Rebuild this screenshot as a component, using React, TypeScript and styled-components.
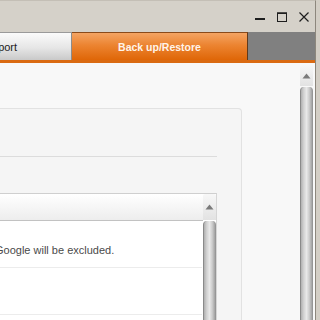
import styled, { createGlobalStyle } from 'styled-components';

const GlobalStyle = createGlobalStyle`
  html, body {
    margin: 0;
    padding: 0;
    overflow: hidden;
  }
  body {
    font-family: "Liberation Sans", Arial, sans-serif;
  }
`;

const Frame = styled.div`
  display: flex;
  width: 320px;
  height: 320px;
  overflow: hidden;
  background: #d3cec5;
  padding-right: 4px;
  box-sizing: border-box;
`;

const Window = styled.div`
  flex: 1;
  display: flex;
  flex-direction: column;
  min-width: 0;
  border-right: 1px solid #8d877d;
  border-top: 1px solid #c4bfb6;
`;

const TitleBar = styled.div`
  height: 31px;
  flex-shrink: 0;
  display: flex;
  align-items: center;
  justify-content: flex-end;
  gap: 12px;
  padding-right: 6px;
  background: #d5d1c9;
`;

const WinButton = styled.button`
  width: 10px;
  height: 10px;
  padding: 0;
  border: none;
  background: transparent;
  display: flex;
  align-items: center;
  justify-content: center;
  svg {
    display: block;
  }
`;

const TabStrip = styled.div`
  height: 28px;
  flex-shrink: 0;
  display: flex;
  align-items: flex-end;
  background: #808080;
`;

const Tab = styled.div<{ $active?: boolean; $width: number; $offset?: number }>`
  width: ${({ $width }) => $width}px;
  margin-left: ${({ $offset }) => $offset ?? 0}px;
  height: 28px;
  box-sizing: border-box;
  display: flex;
  align-items: center;
  justify-content: center;
  font-size: ${({ $active }) => ($active ? '10.5px' : '11px')};
  font-weight: ${({ $active }) => ($active ? 700 : 400)};
  color: ${({ $active }) => ($active ? '#fff4ea' : '#222')};
  border-top: 1px solid ${({ $active }) => ($active ? '#8a4a1a' : '#9a9a9a')};
  border-right: 1px solid ${({ $active }) => ($active ? '#5e3a1e' : '#8c8c8c')};
  background: ${({ $active }) =>
    $active
      ? 'linear-gradient(#f4a463 0%, #ec8431 45%, #df6607 100%)'
      : 'linear-gradient(#fbfbfb 0%, #e6e6e6 55%, #c9c9c9 100%)'};
`;

const OrangeBar = styled.div`
  height: 3px;
  flex-shrink: 0;
  background: #da6a12;
`;

const Body = styled.div`
  flex: 1;
  display: flex;
  min-height: 0;
  background: #f8f8f8;
  padding-right: 2px;
`;

const Main = styled.div`
  flex: 1;
  min-width: 0;
  padding-top: 45px;
  display: flex;
  flex-direction: column;
`;

const Panel = styled.div`
  width: 242px;
  flex: 1;
  box-sizing: border-box;
  background: #f5f5f5;
  border: 1px solid #e2e2e2;
  border-left: none;
  border-bottom: none;
  border-top-right-radius: 4px;
  display: flex;
  flex-direction: column;
`;

const PanelHead = styled.div`
  height: 47px;
  flex-shrink: 0;
  width: 217px;
  border-bottom: 1px solid #dcdcdc;
`;

const List = styled.div`
  margin-top: 36px;
  width: 217px;
  flex: 1;
  box-sizing: border-box;
  border-top: 1px solid #cfcfcf;
  border-right: 1px solid #d6d6d6;
  background: #ffffff;
  display: flex;
`;

const ListMain = styled.div`
  flex: 1;
  min-width: 0;
  display: flex;
  flex-direction: column;
`;

const ListHeader = styled.div`
  height: 26px;
  flex-shrink: 0;
  background: linear-gradient(#ffffff, #ededed);
  border-bottom: 1px solid #c2c2c2;
`;

const Row = styled.div`
  height: 46px;
  flex-shrink: 0;
  display: flex;
  align-items: center;
  border-bottom: 1px solid #ececec;
  margin-right: 1px;
`;

const RowText = styled.span`
  margin-left: -5px;
  padding-top: 12px;
  font-size: 11px;
  color: #4a4a4a;
  white-space: nowrap;
`;

const ScrollTrack = styled.div<{ $upHeight: number }>`
  width: 13px;
  flex-shrink: 0;
  display: flex;
  flex-direction: column;
  gap: 1px;
  padding-top: ${({ $upHeight }) => ($upHeight > 22 ? 0 : 2)}px;
`;

const UpButton = styled.div<{ $h: number }>`
  height: ${({ $h }) => $h}px;
  flex-shrink: 0;
  display: flex;
  align-items: center;
  justify-content: center;
  background: linear-gradient(#f7f7f7, #e2e2e2);
  border-radius: 2px 2px 0 0;
`;

const Thumb = styled.div`
  flex: 1;
  border-radius: 4px 4px 0 0;
  border-left: 1px solid #8a8a8a;
  border-right: 1px solid #969696;
  background: linear-gradient(
    90deg,
    #b0b0b0 0%,
    #d2d2d2 25%,
    #e8e8e8 50%,
    #cccccc 75%,
    #a2a2a2 100%
  );
`;

function Arrow() {
  return (
    <svg width="9" height="6" viewBox="0 0 9 6">
      <path d="M0.5 5.5 L4.5 0.5 L8.5 5.5 Z" fill="#7a7a7a" />
    </svg>
  );
}

function Scrollbar({ up }: { up: number }) {
  return (
    <ScrollTrack $upHeight={up}>
      <UpButton $h={up}>
        <Arrow />
      </UpButton>
      <Thumb />
    </ScrollTrack>
  );
}

export default function App() {
  return (
    <>
      <GlobalStyle />
      <Frame>
        <Window>
          <TitleBar>
            <WinButton aria-label="Minimize">
              <svg width="10" height="10" viewBox="0 0 10 10">
                <rect x="0" y="6" width="10" height="2" fill="#1e1e1e" />
              </svg>
            </WinButton>
            <WinButton aria-label="Maximize">
              <svg width="10" height="10" viewBox="0 0 10 10">
                <rect x="0.5" y="1" width="9" height="8.5" fill="none" stroke="#1e1e1e" strokeWidth="1" />
                <rect x="0" y="0.5" width="10" height="1.5" fill="#1e1e1e" />
              </svg>
            </WinButton>
            <WinButton aria-label="Close">
              <svg width="10" height="10" viewBox="0 0 10 10">
                <path d="M0.5 0.5 L9.5 9.5 M9.5 0.5 L0.5 9.5" stroke="#1e1e1e" strokeWidth="1.2" />
              </svg>
            </WinButton>
          </TitleBar>
          <TabStrip>
            <Tab $width={140} $offset={-68}>Import</Tab>
            <Tab $active $width={176}>Back up/Restore</Tab>
          </TabStrip>
          <OrangeBar />
          <Body>
            <Main>
              <Panel>
                <PanelHead />
                <List>
                  <ListMain>
                    <ListHeader />
                    <Row>
                      <RowText>Google will be excluded.</RowText>
                    </Row>
                    <Row />
                  </ListMain>
                  <Scrollbar up={26} />
                </List>
              </Panel>
            </Main>
            <Scrollbar up={21} />
          </Body>
        </Window>
      </Frame>
    </>
  );
}
